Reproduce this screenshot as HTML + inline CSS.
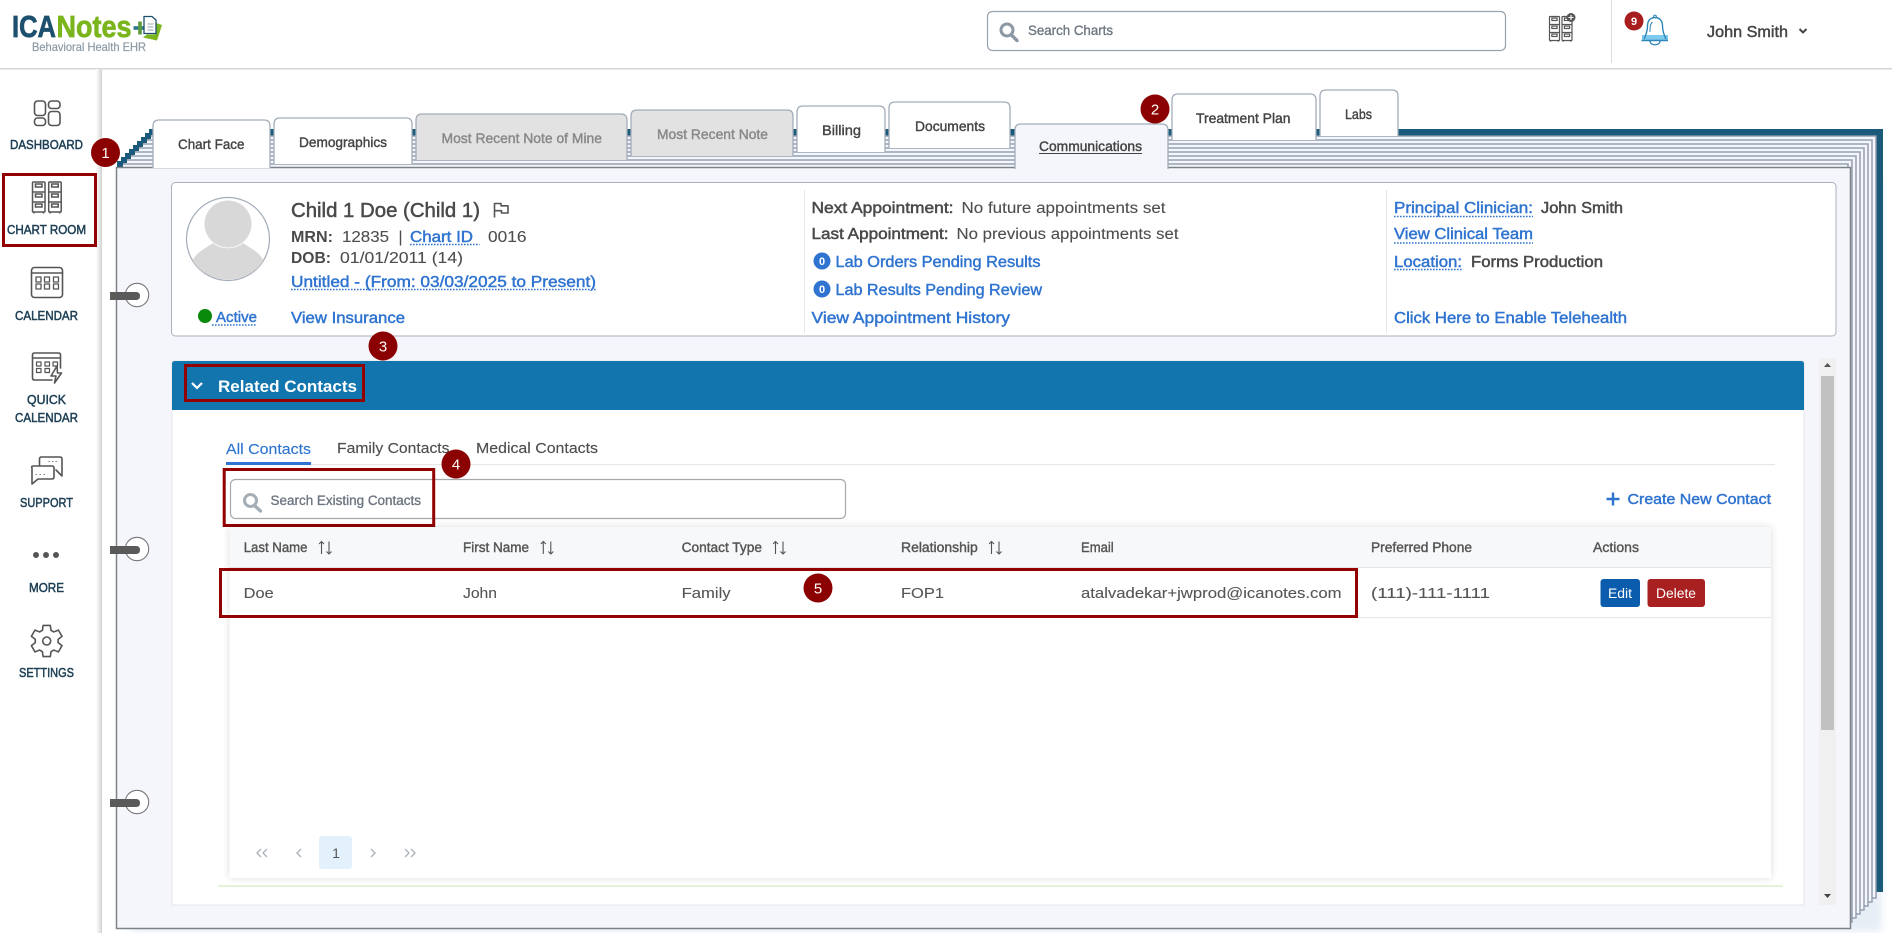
<!DOCTYPE html>
<html lang="en"><head><meta charset="utf-8"><title>ICANotes - Related Contacts</title>
<style>
html,body{margin:0;padding:0;background:#fff;width:1892px;height:933px;overflow:hidden}
svg{display:block;font-family:"Liberation Sans",Arial,sans-serif}
.tab{fill:#fff;stroke:#a3adba;stroke-width:1.3}
.pg{fill:#f5f6fb;stroke:#8e9aad;stroke-width:1.4}
.ic{fill:none;stroke:#555;stroke-width:1.6;stroke-linejoin:round;stroke-linecap:round}
.rb{fill:none;stroke:#920000;stroke-width:3}
.dot{stroke:#2f74d0;stroke-width:1.5;stroke-dasharray:1.6 1.4}
.bd{fill:#8b0000}
.bt{fill:#fff;font-size:15px;text-anchor:middle}
</style></head><body>
<svg width="1892" height="933" viewBox="0 0 1892 933" xmlns="http://www.w3.org/2000/svg">
<defs>
<linearGradient id="sb" x1="0" x2="1"><stop offset="0" stop-color="#fff"/><stop offset="1" stop-color="#dcdcdc"/></linearGradient>
<filter id="sh" x="-5%" y="-5%" width="110%" height="110%"><feGaussianBlur stdDeviation="4"/></filter>
<g id="cab" fill="none" stroke="#555" stroke-width="1.5"><rect x="0" y="0" width="12.5" height="30" rx="1"/><path d="M0 10H12.5M0 20H12.5M1.5 30V31.5M11 30V31.5"/><rect x="3" y="2" width="6.5" height="3"/><rect x="3" y="12" width="6.5" height="3"/><rect x="3" y="22" width="6.5" height="3"/></g>
</defs>

<!-- top bar -->
<rect x="0" y="68" width="1892" height="1.5" fill="#d6d6d6"/>
<g font-weight="700" font-size="30.500" stroke-width=".7">
<text x="12" y="37" fill="#1d4f6e" stroke="#1d4f6e" textLength="44" lengthAdjust="spacingAndGlyphs">ICA</text>
<text x="56.500" y="37" fill="#7ab51d" stroke="#7ab51d" textLength="75" lengthAdjust="spacingAndGlyphs">Notes</text>
</g>
<path d="M133.500 28H146.500" stroke="#2c7a8e" stroke-width="3.600" fill="none"/><path d="M140 21.500V34.500" stroke="#5a9a3c" stroke-width="3.600" fill="none"/>
<path d="M150 21L162 25L157 40.500L143 37.500L147 34.500H155L156 23Z" fill="#7ab51d"/>
<path d="M144 16.500H152L156 20V33.500H144Z" fill="#fff" stroke="#1d4f6e" stroke-width="1.300"/>
<path d="M147.500 24H153.500M147.500 27H153.500M147.500 30H153.500" stroke="#8fa5b2" stroke-width="1"/>
<text x="32" y="51" fill="#8b9aa5" stroke="#8b9aa5" stroke-width=".2" font-size="12" textLength="114" lengthAdjust="spacingAndGlyphs">Behavioral Health EHR</text>

<rect x="987.500" y="11.500" width="518" height="39" rx="5" fill="#fff" stroke="#9aa3ad" stroke-width="1.200"/>
<circle cx="1007" cy="30" r="6" fill="none" stroke="#8c98a3" stroke-width="3"/><path d="M1011.500 35L1017 40.500" stroke="#8c98a3" stroke-width="3.400" stroke-linecap="round"/>
<text x="1028" y="35" fill="#6d7680" stroke="#6d7680" stroke-width=".35" font-size="14" textLength="85" lengthAdjust="spacingAndGlyphs">Search Charts</text>

<use href="#cab" transform="translate(1549.500 16.500) scale(.8)"/><use href="#cab" transform="translate(1562 16.500) scale(.8)"/>
<circle cx="1571" cy="17.500" r="4.500" fill="#555"/><path d="M1568.500 17.500H1573.500M1571 15V20" stroke="#fff" stroke-width="1.100"/>
<rect x="1611" y="0" width="1" height="63" fill="#ddd"/>

<rect x="1642" y="35" width="26" height="5" fill="#7ccbee"/>
<path d="M1644 39C1647 33 1647.500 29 1647.500 26C1647.500 20 1651 17.500 1655 17.500C1659 17.500 1662.500 20 1662.500 26C1662.500 29 1663 33 1666 39" fill="none" stroke="#2f86b8" stroke-width="1.400"/>
<path d="M1641.500 40.500H1668" stroke="#2f86b8" stroke-width="1.400"/>
<path d="M1650 41C1650 46 1660 46 1660 41" fill="none" stroke="#2f86b8" stroke-width="1.300"/><circle cx="1655" cy="16.500" r="1.400" fill="none" stroke="#2f86b8"/>
<path d="M1650 32C1650 28 1650 24 1652.500 22" fill="none" stroke="#2f86b8" stroke-width="1"/>
<circle cx="1634" cy="21" r="9.500" fill="#a81e1e"/><text x="1634" y="25" fill="#fff" font-weight="700" font-size="11" text-anchor="middle">9</text>
<text x="1707" y="37" fill="#444" stroke="#444" stroke-width=".45" font-size="16" textLength="81" lengthAdjust="spacingAndGlyphs">John Smith</text>
<path d="M1799.500 29L1803 32.500L1806.500 29" fill="none" stroke="#444" stroke-width="2"/>

<!-- sidebar -->
<rect x="96" y="69" width="5" height="864" fill="url(#sb)"/><rect x="101" y="69" width="1" height="864" fill="#d4d4d4"/>
<g class="ic">
<rect x="34.500" y="101" width="11" height="14.500" rx="3"/><rect x="48.500" y="101" width="11.500" height="7.500" rx="3"/><rect x="34.500" y="118" width="11" height="7.500" rx="3"/><rect x="48.500" y="111.500" width="11.500" height="14" rx="3"/>
<rect x="31.500" y="267.500" width="31" height="30" rx="3"/><path d="M31.500 273H62.500"/>
<g stroke-width="1.300"><rect x="36" y="277" width="5" height="5"/><rect x="44.500" y="277" width="5" height="5"/><rect x="53.500" y="277" width="5" height="5"/><rect x="36" y="284" width="5" height="5"/><rect x="44.500" y="284" width="5" height="5"/><rect x="53.500" y="284" width="5" height="5"/></g>
<path d="M52 380H34.500Q32.500 380 32.500 378V355Q32.500 353 34.500 353H58.500Q60.500 353 60.500 355V368M32.500 358H60.500"/>
<g stroke-width="1.200"><rect x="36.500" y="362" width="4.500" height="4"/><rect x="45" y="362" width="4.500" height="4"/><rect x="53" y="362" width="4.500" height="4"/><rect x="36.500" y="368.500" width="4.500" height="4"/><rect x="45" y="368.500" width="4.500" height="4"/></g>
<path d="M57 366L51 376H56L54.500 383L61.500 373H57.500Z" fill="#fff"/>
<path d="M48 470H41.500Q39.500 470 39.500 468V459Q39.500 457 41.500 457H60Q62 457 62 459V476L56 470"/>
<path d="M33 466H52Q54 466 54 468V477Q54 479 52 479H38L32 484V468Q31 466 33 466Z" fill="#fff"/>
<path d="M49 461.500H49.300M52.500 461.500H52.800M56 461.500H56.300M36 474.500H36.300M40 474.500H40.300M44 474.500H44.300" stroke-width="1.100"/>
<path transform="translate(46.700 641)" d="M-4.310-10.660L-3.600-15.590L3.600-15.590L4.310-10.660L7.080-9.060L11.700-10.910L15.300-4.680L11.390-1.600L11.390 1.600L15.300 4.680L11.700 10.910L7.080 9.060L4.310 10.660L3.600 15.590L-3.600 15.590L-4.310 10.660L-7.080 9.060L-11.700 10.910L-15.300 4.680L-11.390 1.600L-11.390-1.600L-15.300-4.680L-11.700-10.910L-7.080-9.060Z"/>
<circle cx="46.700" cy="641" r="4"/>
</g>
<use href="#cab" x="32.500" y="182"/><use href="#cab" x="48.700" y="182"/>
<circle cx="36" cy="555" r="3" fill="#555"/><circle cx="46" cy="555" r="3" fill="#555"/><circle cx="56" cy="555" r="3" fill="#555"/>
<g fill="#1d3f55" stroke="#1d3f55" stroke-width=".5" font-size="13">
<text x="10" y="149" textLength="73" lengthAdjust="spacingAndGlyphs">DASHBOARD</text>
<text x="7" y="234" textLength="79" lengthAdjust="spacingAndGlyphs">CHART ROOM</text>
<text x="15" y="320" textLength="63" lengthAdjust="spacingAndGlyphs">CALENDAR</text>
<text x="27" y="404" textLength="39" lengthAdjust="spacingAndGlyphs">QUICK</text>
<text x="15" y="422" textLength="63" lengthAdjust="spacingAndGlyphs">CALENDAR</text>
<text x="20" y="507" textLength="53" lengthAdjust="spacingAndGlyphs">SUPPORT</text>
<text x="29" y="592" textLength="35" lengthAdjust="spacingAndGlyphs">MORE</text>
<text x="19" y="677" textLength="55" lengthAdjust="spacingAndGlyphs">SETTINGS</text>
</g>
<rect x="3.500" y="174.500" width="92" height="71" class="rb"/>

<!-- binder stack -->
<rect x="130" y="180" width="1752" height="752" fill="#c6d6ea" filter="url(#sh)" opacity=".4"/>
<rect x="153" y="129" width="1730" height="763" fill="#1c5a7c"/>
<rect class="pg" x="148" y="136" width="1728" height="762"/>
<path class="tab" d="M1320 136V96Q1320 90 1326 90H1392Q1398 90 1398 96V136"/>
<rect class="pg" x="144" y="140" width="1728" height="762"/>
<path class="tab" d="M1172 140V100Q1172 94 1178 94H1310Q1316 94 1316 100V140"/>
<rect class="pg" x="140" y="144" width="1728" height="762"/>
<rect class="pg" x="136" y="148" width="1728" height="762"/>
<path class="tab" d="M889 148V108Q889 102 895 102H1004Q1010 102 1010 108V148"/>
<rect class="pg" x="132" y="152" width="1728" height="762"/>
<path class="tab" d="M797 152V112Q797 106 803 106H879Q885 106 885 112V152"/>
<rect class="pg" x="128" y="156" width="1728" height="762"/>
<path class="tab" style="fill:#e2e2e2" d="M631 156V116Q631 110 637 110H787Q793 110 793 116V156"/>
<rect class="pg" x="124" y="160" width="1728" height="762"/>
<path class="tab" style="fill:#e2e2e2" d="M416 160V120Q416 114 422 114H621Q627 114 627 120V160"/>
<rect class="pg" x="120" y="164" width="1728" height="762"/>
<path class="tab" d="M274 164V124Q274 118 280 118H406Q412 118 412 124V164"/>
<g fill="#1c5a7c"><rect x="117" y="161" width="6" height="6"/><rect x="121" y="157" width="6" height="6"/><rect x="125" y="153" width="6" height="6"/><rect x="129" y="149" width="6" height="6"/><rect x="133" y="145" width="6" height="6"/><rect x="137" y="141" width="6" height="6"/><rect x="141" y="137" width="6" height="6"/><rect x="145" y="133" width="6" height="6"/><rect x="149" y="129" width="6" height="6"/></g>
<rect x="116.500" y="167.500" width="1734" height="761" fill="#f5f6fb" stroke="#7d8288" stroke-width="1.500"/>
<path class="tab" d="M153 168V126Q153 120 159 120H264Q270 120 270 126V168"/>
<path class="tab" style="fill:#f5f6fb" d="M1015 169V130Q1015 124 1021 124H1162Q1168 124 1168 130V169"/>
<rect x="1016" y="167" width="151" height="3" fill="#f5f6fb"/>
<rect x="154" y="166" width="115" height="2" fill="#fff"/>

<!-- tab labels -->
<g fill="#444" stroke="#444" stroke-width=".4" font-size="14">
<text x="178" y="149" textLength="66.500" lengthAdjust="spacingAndGlyphs">Chart Face</text>
<text x="299" y="147" textLength="88" lengthAdjust="spacingAndGlyphs">Demographics</text>
<text x="822" y="135" textLength="39" lengthAdjust="spacingAndGlyphs">Billing</text>
<text x="915" y="131" textLength="70" lengthAdjust="spacingAndGlyphs">Documents</text>
<text x="1196" y="123" textLength="94.500" lengthAdjust="spacingAndGlyphs">Treatment Plan</text>
<text x="1345" y="119" textLength="27" lengthAdjust="spacingAndGlyphs">Labs</text>
<text x="1039" y="151" textLength="103" lengthAdjust="spacingAndGlyphs" font-size="13.500">Communications</text>
</g>
<rect x="1039" y="153" width="103" height="1" fill="#444"/>
<g fill="#888" stroke="#888" stroke-width=".4" font-size="14">
<text x="441.500" y="143" textLength="160.500" lengthAdjust="spacingAndGlyphs">Most Recent Note of Mine</text>
<text x="657" y="139" textLength="111" lengthAdjust="spacingAndGlyphs">Most Recent Note</text>
</g>

<!-- patient card -->
<rect x="171.500" y="182.500" width="1664.500" height="153.500" rx="4" fill="#fff" stroke="#a9b0bb"/>
<rect x="804" y="190" width="1" height="143" fill="#e6e6e6"/><rect x="1386" y="190" width="1" height="143" fill="#e6e6e6"/>
<circle cx="228" cy="239" r="41.500" fill="#fff" stroke="#a4acb8" stroke-width="1.200"/>
<path d="M192.500 260C199 250 208 247 213 243C220 250 236 250 243 243C248 247 257 250 263.500 260C257 272 243 279.500 228 279.500C213 279.500 199 272 192.500 260Z" fill="#d8d8d8"/>
<circle cx="228" cy="224" r="23.500" fill="#d8d8d8"/>
<g fill="#4a4a4a" stroke="#4a4a4a" stroke-width=".5">
<text x="291" y="217" font-size="20.500" textLength="189" lengthAdjust="spacingAndGlyphs">Child 1 Doe (Child 1)</text>
<g font-weight="700" stroke="none" font-size="15.500">
<text x="291" y="242" textLength="42" lengthAdjust="spacingAndGlyphs">MRN:</text>
<text x="291" y="263" textLength="40" lengthAdjust="spacingAndGlyphs">DOB:</text>
</g></g>
<path d="M494.500 217.500V203.500H501V205.800H508V213H501.500V210.700H494.500" fill="none" stroke="#555" stroke-width="1.600" stroke-linejoin="round"/>
<g fill="#4e4e4e" stroke="#4e4e4e" stroke-width=".1" font-size="15.500">
<text x="342" y="242" textLength="47" lengthAdjust="spacingAndGlyphs">12835</text>
<text x="398.500" y="242">|</text>
<text x="488" y="242" textLength="38.500" lengthAdjust="spacingAndGlyphs">0016</text>
<text x="340" y="263" textLength="123" lengthAdjust="spacingAndGlyphs">01/01/2011 (14)</text>
<text x="961.500" y="213" textLength="204" lengthAdjust="spacingAndGlyphs">No future appointments set</text>
<text x="956.500" y="239" textLength="222" lengthAdjust="spacingAndGlyphs">No previous appointments set</text>
</g>
<g fill="#4a4a4a" stroke="#4a4a4a" stroke-width=".5" font-size="15.500">
<text x="811.500" y="213" textLength="142" lengthAdjust="spacingAndGlyphs">Next Appointment:</text>
<text x="811.500" y="239" textLength="137" lengthAdjust="spacingAndGlyphs">Last Appointment:</text>
<text x="1541" y="213" textLength="82" lengthAdjust="spacingAndGlyphs">John Smith</text>
<text x="1471" y="267" textLength="132" lengthAdjust="spacingAndGlyphs">Forms Production</text>
</g>
<g fill="#2f74d0" stroke="#2f74d0" stroke-width=".45" font-size="15.500">
<text x="410" y="242" textLength="63" lengthAdjust="spacingAndGlyphs">Chart ID</text>
<text x="291" y="287" textLength="305" lengthAdjust="spacingAndGlyphs">Untitled - (From: 03/03/2025 to Present)</text>
<text x="216" y="322" textLength="41" lengthAdjust="spacingAndGlyphs" font-size="14.500">Active</text>
<text x="291" y="323" textLength="114" lengthAdjust="spacingAndGlyphs">View Insurance</text>
<text x="835.500" y="267" textLength="205" lengthAdjust="spacingAndGlyphs">Lab Orders Pending Results</text>
<text x="835.500" y="295" textLength="206.500" lengthAdjust="spacingAndGlyphs">Lab Results Pending Review</text>
<text x="811.500" y="323" textLength="198.500" lengthAdjust="spacingAndGlyphs">View Appointment History</text>
<text x="1394" y="213" textLength="139" lengthAdjust="spacingAndGlyphs">Principal Clinician:</text>
<text x="1394" y="239" textLength="139" lengthAdjust="spacingAndGlyphs">View Clinical Team</text>
<text x="1394" y="267" textLength="68" lengthAdjust="spacingAndGlyphs">Location:</text>
<text x="1394" y="323" textLength="233" lengthAdjust="spacingAndGlyphs">Click Here to Enable Telehealth</text>
</g>
<g class="dot"><path d="M410 244.500H479.500M291 289.500H596M212 325H257M1394 216.500H1533M1394 243H1533M1394 269.500H1462"/></g>
<circle cx="205" cy="316" r="7" fill="#0a8a0a"/>
<circle cx="822" cy="261" r="8.500" fill="#2f74d0"/><text x="822" y="265" fill="#fff" font-size="11" font-weight="700" text-anchor="middle">0</text>
<circle cx="822" cy="289" r="8.500" fill="#2f74d0"/><text x="822" y="293" fill="#fff" font-size="11" font-weight="700" text-anchor="middle">0</text>

<!-- related contacts panel -->
<rect x="172" y="361" width="1632" height="544" fill="#fff" stroke="#e4e6ea"/>
<path d="M172 410V364Q172 361 175 361H1801Q1804 361 1804 364V410Z" fill="#1275ae"/>
<path d="M192 383L197 388L202 383" fill="none" stroke="#fff" stroke-width="2.200"/>
<text x="218" y="392" fill="#fff" font-weight="700" font-size="17" textLength="139" lengthAdjust="spacingAndGlyphs">Related Contacts</text>
<rect class="rb" x="185.500" y="365.500" width="178" height="35"/>

<rect x="226" y="464" width="1549" height="1.200" fill="#e8e8e8"/>
<text x="226" y="454" fill="#2f74d0" stroke="#2f74d0" stroke-width=".15" font-size="15" textLength="85" lengthAdjust="spacingAndGlyphs">All Contacts</text>
<rect x="226" y="462" width="85" height="3" fill="#2f74d0"/>
<text x="337" y="453" fill="#4e4e4e" stroke="#4e4e4e" stroke-width=".15" font-size="15" textLength="112.500" lengthAdjust="spacingAndGlyphs">Family Contacts</text>
<text x="476" y="453" fill="#4e4e4e" stroke="#4e4e4e" stroke-width=".15" font-size="15" textLength="122" lengthAdjust="spacingAndGlyphs">Medical Contacts</text>

<rect x="230.500" y="479.500" width="615" height="39" rx="5" fill="#fff" stroke="#a5a9ae" stroke-width="1.200"/>
<circle cx="250.500" cy="500.500" r="6" fill="none" stroke="#a5adb5" stroke-width="3"/><path d="M255 506L260.500 511" stroke="#a5adb5" stroke-width="3.400" stroke-linecap="round"/>
<text x="270.500" y="505" fill="#6d7680" stroke="#6d7680" stroke-width=".35" font-size="13.500" textLength="150.500" lengthAdjust="spacingAndGlyphs">Search Existing Contacts</text>
<rect class="rb" x="224.200" y="469.500" width="209.500" height="56"/>

<path d="M1613 492.500V505.500M1606.500 499H1619.500" stroke="#2f74d0" stroke-width="2.400"/>
<text x="1627.500" y="504" fill="#2f74d0" stroke="#2f74d0" stroke-width=".45" font-size="15" textLength="143.500" lengthAdjust="spacingAndGlyphs">Create New Contact</text>

<!-- table -->
<rect x="229.500" y="527" width="1541.500" height="351" fill="#000" opacity=".14" filter="url(#sh)"/>
<rect x="229.500" y="527" width="1541.500" height="351" fill="#fff"/>
<rect x="229.500" y="527" width="1541.500" height="40" fill="#f7f8fa"/>
<rect x="229.500" y="567" width="1541.500" height="1" fill="#e5e6e8"/>
<rect x="229.500" y="617" width="1541.500" height="1" fill="#e5e6e8"/>
<g fill="#555" stroke="#555" stroke-width=".4" font-size="13.500">
<text x="243.700" y="552" textLength="63.800" lengthAdjust="spacingAndGlyphs">Last Name</text>
<text x="463" y="552" textLength="66" lengthAdjust="spacingAndGlyphs">First Name</text>
<text x="681.600" y="552" textLength="80.400" lengthAdjust="spacingAndGlyphs">Contact Type</text>
<text x="901" y="552" textLength="76.700" lengthAdjust="spacingAndGlyphs">Relationship</text>
<text x="1081" y="552" textLength="32.700" lengthAdjust="spacingAndGlyphs">Email</text>
<text x="1371" y="552" textLength="101" lengthAdjust="spacingAndGlyphs">Preferred Phone</text>
<text x="1593" y="552" textLength="46" lengthAdjust="spacingAndGlyphs">Actions</text>
</g>
<g fill="none" stroke="#555" stroke-width="1.100">
<path d="M321.500 554V541.500M319 544L321.500 541.500L324 544M329 541.500V554M326.500 551.500L329 554L331.500 551.500"/>
<path d="M543.300 554V541.500M540.800 544L543.300 541.500L545.800 544M550.800 541.500V554M548.300 551.500L550.800 554L553.300 551.500"/>
<path d="M775.500 554V541.500M773 544L775.500 541.500L778 544M783 541.500V554M780.500 551.500L783 554L785.500 551.500"/>
<path d="M991.500 554V541.500M989 544L991.500 541.500L994 544M999 541.500V554M996.500 551.500L999 554L1001.500 551.500"/>
</g>
<g fill="#555" stroke="#555" stroke-width=".1" font-size="15">
<text x="243.700" y="598" textLength="30" lengthAdjust="spacingAndGlyphs">Doe</text>
<text x="463" y="598" textLength="34" lengthAdjust="spacingAndGlyphs">John</text>
<text x="681.600" y="598" textLength="49" lengthAdjust="spacingAndGlyphs">Family</text>
<text x="901" y="598" textLength="43" lengthAdjust="spacingAndGlyphs">FOP1</text>
<text x="1081" y="598" textLength="260.600" lengthAdjust="spacingAndGlyphs">atalvadekar+jwprod@icanotes.com</text>
<text x="1371" y="598" textLength="119" lengthAdjust="spacingAndGlyphs">(111)-111-1111</text>
</g>
<rect x="1600.500" y="579" width="39.500" height="28" rx="3" fill="#0b5cad"/>
<text x="1608" y="598" fill="#fff" font-size="13.500" textLength="24" lengthAdjust="spacingAndGlyphs">Edit</text>
<rect x="1647.500" y="579" width="57.500" height="28" rx="3" fill="#a82020"/>
<text x="1656" y="598" fill="#fff" font-size="13.500" textLength="40" lengthAdjust="spacingAndGlyphs">Delete</text>
<rect class="rb" x="220.500" y="569.500" width="1136" height="47"/>

<!-- pagination -->
<rect x="319" y="836" width="33" height="33" rx="3" fill="#e3f1fc"/>
<text x="336" y="858" fill="#555" font-size="14" text-anchor="middle">1</text>
<g fill="none" stroke="#aab0b6" stroke-width="1.300">
<path d="M261 849L257 853L261 857M267 849L263 853L267 857M301 849L297 853L301 857M371 849L375 853L371 857M405 849L409 853L405 857M411 849L415 853L411 857"/>
</g>
<rect x="218" y="885.500" width="1565" height="1.200" fill="#d6e8bd"/>

<!-- scrollbar -->
<rect x="1819" y="358" width="17" height="547" fill="#f0f0f0"/>
<rect x="1821" y="376" width="13" height="354" fill="#c1c1c1"/>
<path d="M1824 367L1827.500 363L1831 367Z" fill="#555"/><path d="M1824 894H1831L1827.500 898Z" fill="#444"/>

<!-- binder rings -->
<g fill="#fff" stroke="#777" stroke-width="1.100"><circle cx="137" cy="295" r="11.700"/><circle cx="137" cy="549" r="11.700"/><circle cx="137" cy="802" r="11.700"/></g>
<g fill="#5a5a5a"><path d="M110 292H136Q140 292 140 296Q140 300 136 300H110Z"/><path d="M110 546H136Q140 546 140 550Q140 554 136 554H110Z"/><path d="M110 799H136Q140 799 140 803Q140 807 136 807H110Z"/></g>

<!-- numbered callouts -->
<circle class="bd" cx="105.500" cy="152.500" r="14.500"/><text class="bt" x="105.500" y="158">1</text>
<circle class="bd" cx="1155" cy="109" r="14.500"/><text class="bt" x="1155" y="114.500">2</text>
<circle class="bd" cx="383" cy="346" r="14.500"/><text class="bt" x="383" y="351.500">3</text>
<circle class="bd" cx="456" cy="464" r="14.500"/><text class="bt" x="456" y="469.500">4</text>
<circle class="bd" cx="818" cy="588" r="14.500"/><text class="bt" x="818" y="593.500">5</text>
</svg>
</body></html>
